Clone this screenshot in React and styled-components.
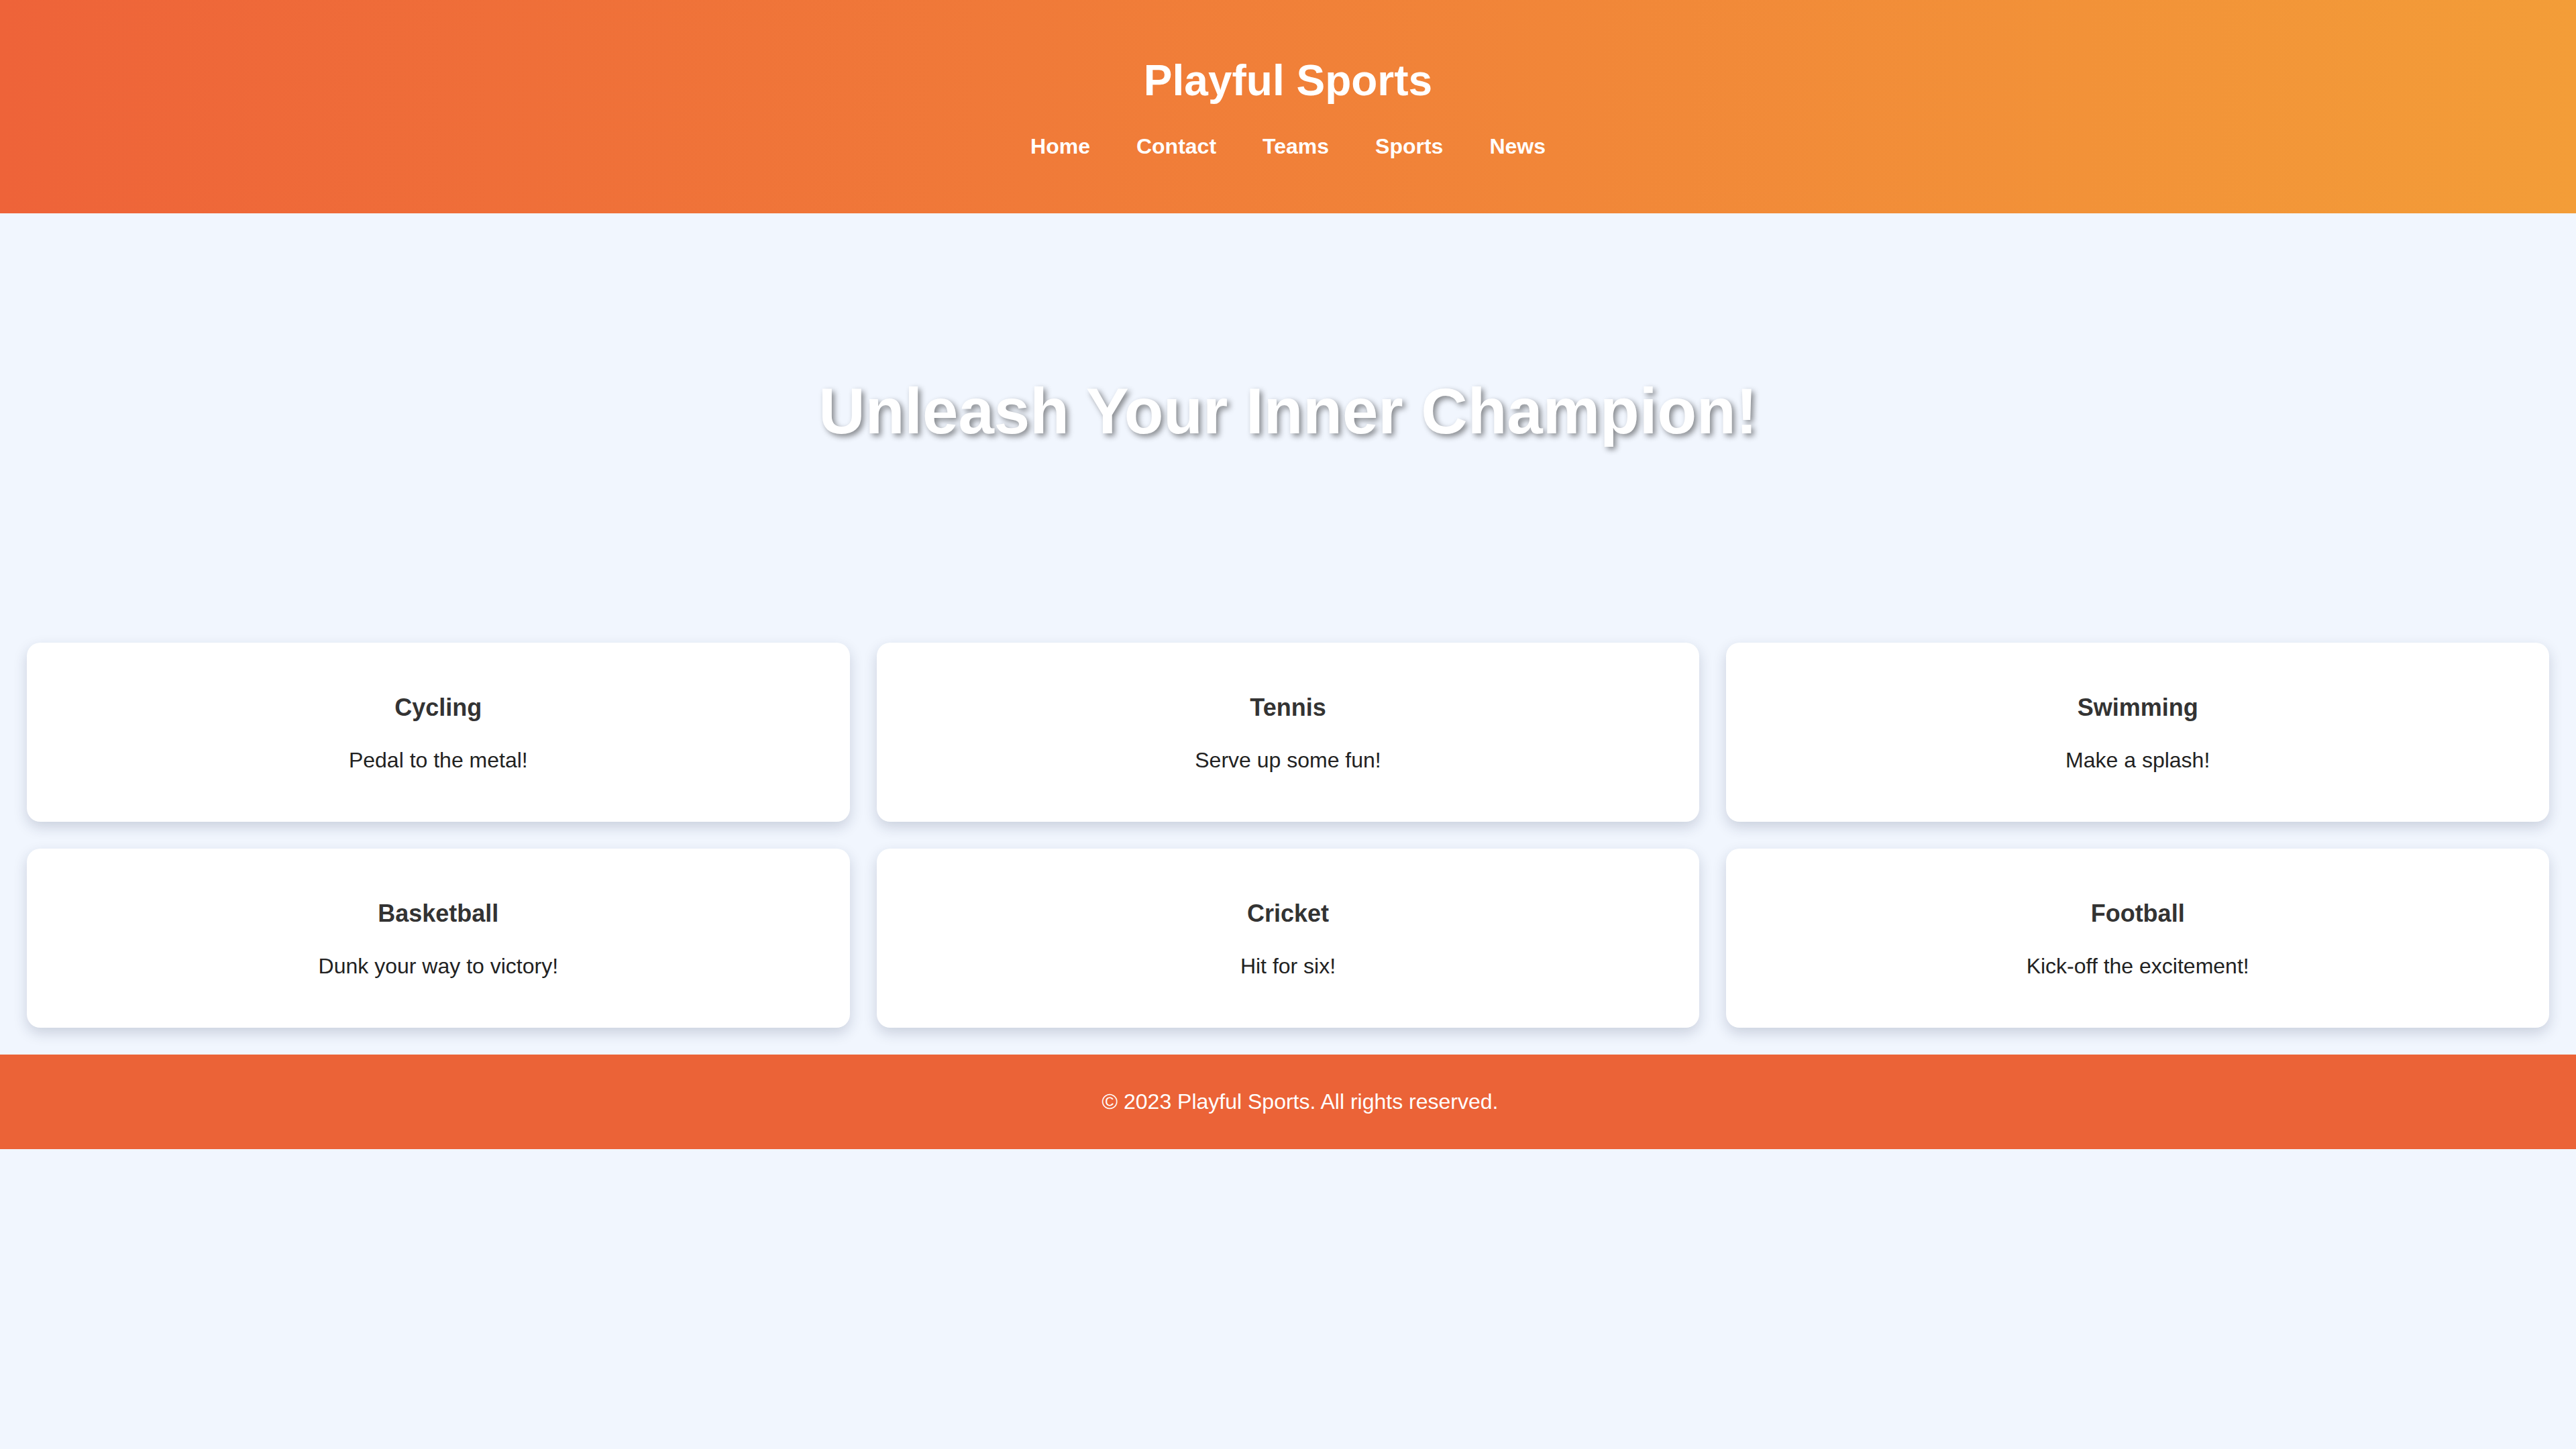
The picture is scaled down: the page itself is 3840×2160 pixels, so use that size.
import React from "react";
import styled, { createGlobalStyle } from "styled-components";

const Global = createGlobalStyle`
html,body{margin:0;padding:0;background:#f1f6fe;}
body{font-family:"Liberation Sans",Arial,Helvetica,sans-serif;color:#333;}
*{box-sizing:border-box;}
`;

const Header = styled.header`
background:linear-gradient(to right,#ee6339,#f39d38);color:#fff;text-align:center;padding:83px 20px 81px;
display:flex;flex-direction:column;align-items:center;row-gap:43px;
& h1{margin:0;font-size:64px;line-height:74px;font-weight:700;}
`;

const Nav = styled.nav`
display:flex;justify-content:center;column-gap:69px;
& a{color:#fff;text-decoration:none;font-weight:700;font-size:32px;line-height:37px;}
`;

const Hero = styled.section`
padding:240px 20px 250px;text-align:center;
& h2{margin:0;font-size:96px;line-height:110px;font-weight:700;color:#fff;text-shadow:4px 4px 8px rgba(0,0,0,0.45);}
`;

const Grid = styled.section`
display:grid;grid-template-columns:repeat(3,1fr);gap:40px;padding:40px;
`;

const Card = styled.div`
background:#fff;border-radius:20px;box-shadow:0 8px 20px rgba(30,40,70,0.18);text-align:center;padding:76px 40px 69px;
& h3{margin:0 0 36px;font-size:36px;line-height:41px;font-weight:700;color:#333;}
& p{margin:0;font-size:32px;line-height:45px;color:#222;}
`;

const Footer = styled.footer`
background:#eb6337;color:#fff;text-align:center;padding:52px 0 52px 36px;
& p{margin:0;font-size:32px;line-height:37px;}
`;

const sports = [
    {id:1,name:"Cycling",desc:"Pedal to the metal!"},
    {id:2,name:"Tennis",desc:"Serve up some fun!"},
    {id:3,name:"Swimming",desc:"Make a splash!"},
    {id:4,name:"Basketball",desc:"Dunk your way to victory!"},
    {id:5,name:"Cricket",desc:"Hit for six!"},
    {id:6,name:"Football",desc:"Kick-off the excitement!"}
];

const App = () => {
    return (
        <>
            <Global />
            <Header>
                <h1>Playful Sports</h1>
                <Nav>
                    {["Home","Contact","Teams","Sports","News"].map((n) => (
                        <a key={n} href="#">{n}</a>
                    ))}
                </Nav>
            </Header>
            <Hero>
                <h2>Unleash Your Inner Champion!</h2>
            </Hero>
            <Grid>
                {sports.map((s) => (
                    <Card key={s.id}>
                        <h3>{s.name}</h3>
                        <p>{s.desc}</p>
                    </Card>
                ))}
            </Grid>
            <Footer>
                <p>© 2023 Playful Sports. All rights reserved.</p>
            </Footer>
        </>
    );
};

export default App;
